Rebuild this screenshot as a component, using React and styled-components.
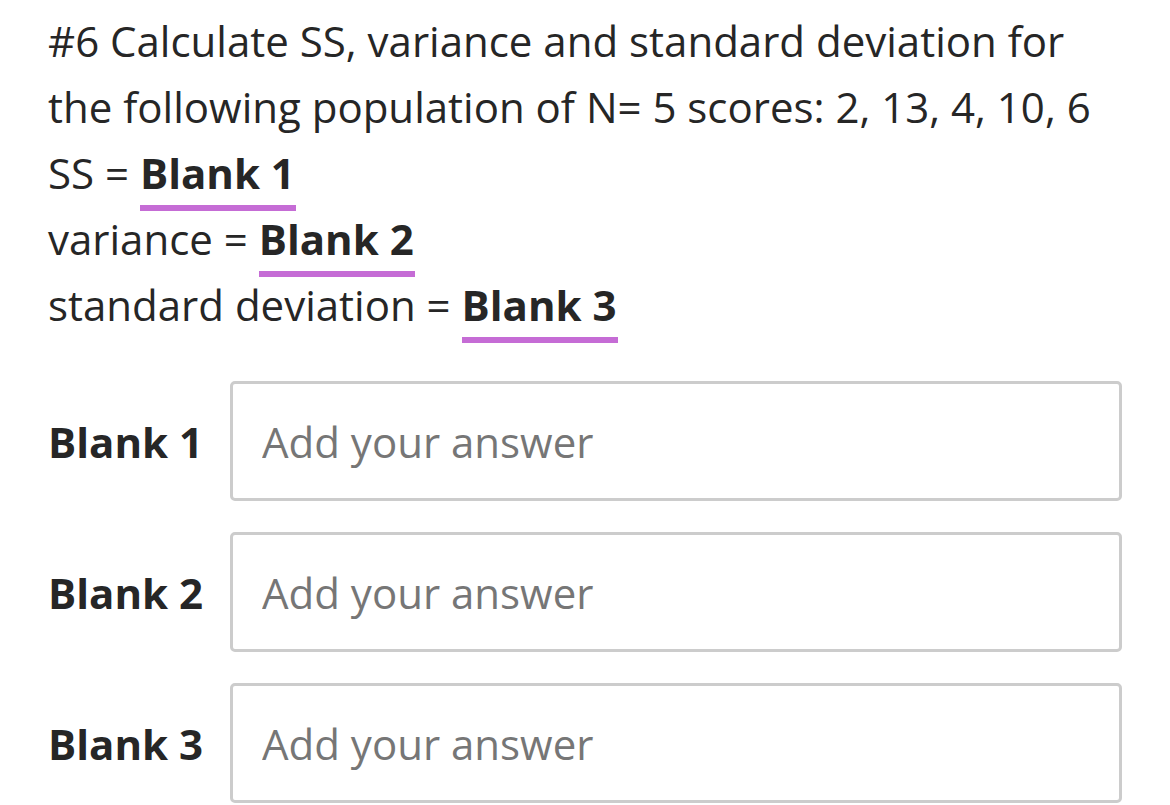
import React from 'react';
import styled, { createGlobalStyle } from 'styled-components';

const GlobalStyle = createGlobalStyle`
  body {
    margin: 0;
    background: #ffffff;
    font-family: "Open Sans", "Liberation Sans", sans-serif;
    color: #262626;
  }
`;

const Page = styled.div`
  padding: 8px 48px 0 48px;
`;

const Question = styled.div`
  font-size: 42px;
  line-height: 66px;
  color: #262626;
`;

const Line = styled.div`
  white-space: nowrap;
`;

const BlankRef = styled.span`
  font-weight: 700;
  display: inline-block;
  line-height: 64px;
  padding-right: 1px;
  border-bottom: 6px solid #c56cd5;
  margin-bottom: -6px;
`;

const Answers = styled.div`
  margin-top: 43px;
  display: flex;
  flex-direction: column;
  gap: 31px;
  width: 1074px;
`;

const Row = styled.div`
  display: flex;
  align-items: center;
`;

const Label = styled.label`
  width: 182px;
  flex-shrink: 0;
  font-size: 42px;
  font-weight: 700;
  color: #262626;
`;

const Input = styled.input`
  flex: 1;
  height: 120px;
  box-sizing: border-box;
  border: 3px solid #cccccc;
  border-radius: 5px;
  padding: 0 29px;
  font-family: "Open Sans", "Liberation Sans", sans-serif;
  font-size: 42px;
  color: #262626;
  outline: none;

  &::placeholder {
    color: #767676;
  }
`;

const blanks = ['Blank 1', 'Blank 2', 'Blank 3'];

const App = () => (
  <>
    <GlobalStyle />
    <Page>
      <Question>
        <Line>#6 Calculate SS, variance and standard deviation for</Line>
        <Line>the following population of N= 5 scores: 2, 13, 4, 10, 6</Line>
        <Line>SS = <BlankRef>Blank 1</BlankRef></Line>
        <Line>variance = <BlankRef>Blank 2</BlankRef></Line>
        <Line>standard deviation = <BlankRef>Blank 3</BlankRef></Line>
      </Question>
      <Answers>
        {blanks.map((b) => (
          <Row key={b}>
            <Label>{b}</Label>
            <Input placeholder="Add your answer" />
          </Row>
        ))}
      </Answers>
    </Page>
  </>
);

export default App;
